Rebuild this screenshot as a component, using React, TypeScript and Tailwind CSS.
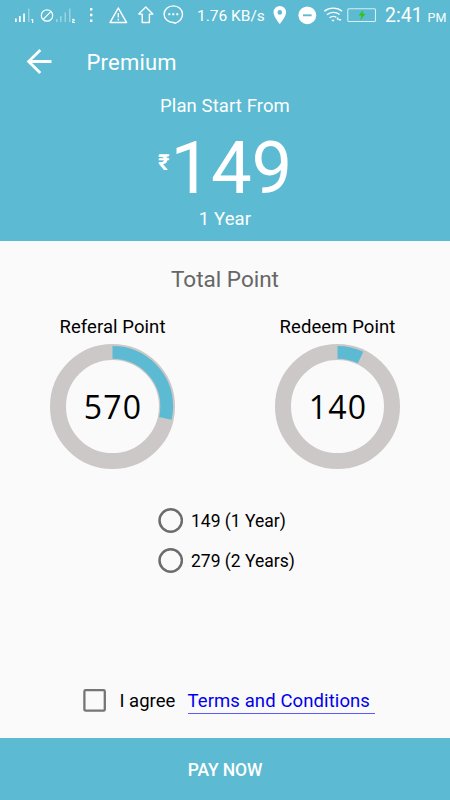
import React, { useState } from 'react';

interface PointRingProps {
  label: string;
  points: number;
}

interface Plan {
  id: string;
  label: string;
}

const MAX_POINTS = 2000;

const PLANS: Plan[] = [
  { id: 'one', label: '149 (1 Year)' },
  { id: 'two', label: '279 (2 Years)' },
];

const StatusBar: React.FC = () => (
  <div className="flex h-8 items-center text-white">
    {/* Signals and notifications */}
    <svg className="h-8 w-[190px] shrink-0" viewBox="0 0 190 32" fill="none">
      <g fill="#fff">
        <path d="M15 18.500h1.700V22H15zM19 16h1.700v6H19zM23.200 13.500h1.700V22h-1.700z" />
        <path d="M28 8.500h1.500V22H28z" opacity="0.350" />
        <path d="M31.400 19h1.800v4h-1.200v-2.700h-.8z" />
        <path d="M56 19h1.600v3H56zM60 16h1.600v6H60zM64.500 12.500H66V22h-1.500zM69 8.500h1.500V22H69z" opacity="0.380" />
        <path d="M90 8h2.400v2.400H90zM90 13.800h2.400v2.400H90zM90 19.600h2.400V22H90z" />
      </g>
      <circle cx="47" cy="15.500" r="5.700" stroke="#fff" strokeWidth="1.200" />
      <path d="M43.200 19.400l7.600-7.800" stroke="#fff" strokeWidth="1.200" />
      <path d="M72 19.400h2.200v1.500h-1.700v1.600h2.500" stroke="#fff" strokeWidth="1" />
      <path d="M118.300 8l8.300 14.600H110z" stroke="#fff" strokeWidth="1.500" strokeLinejoin="round" />
      <path d="M118.300 13v4.500M118.300 18.800v1.700" stroke="#fff" strokeWidth="1.400" />
      <path d="M145.800 7l7 7.100h-3.400v8.400h-7.200v-8.400h-3.400z" stroke="#fff" strokeWidth="1.400" strokeLinejoin="round" />
      <path d="M175 23.300c-.4-.4-.8-.8-1.700-.8-5.200 0-9.200-3.700-9.200-8.300s4.100-8.300 9.200-8.300 9.200 3.700 9.200 8.300c0 4.200-2.900 7.300-7.500 9.100z" stroke="#fff" strokeWidth="1.400" />
      <path d="M168.300 13.300h2v2h-2zM172.300 13.300h2v2h-2zM176.300 13.300h2v2h-2z" fill="#fff" />
    </svg>
    <span className="ml-[7px] w-[70px] whitespace-nowrap text-[15.500px] leading-8">1.76 KB/s</span>
    {/* Location, do not disturb, wifi, battery */}
    <svg className="h-8 w-[116px] shrink-0" viewBox="267 0 116 32" fill="none">
      <path d="M279.800 6a6.300 6.300 0 0 0-6.300 6.300c0 4.700 6.300 11.700 6.300 11.700s6.300-7 6.300-11.700A6.300 6.300 0 0 0 279.800 6zm0 4.100a2.300 2.300 0 1 1 0 4.600 2.300 2.300 0 0 1 0-4.600z" fill="#fff" fillRule="evenodd" />
      <circle cx="307.300" cy="15.300" r="8.900" fill="#fff" />
      <path d="M303 15.300h8.600" stroke="#5cbad2" strokeWidth="1.900" />
      <path d="M324.300 11.300c5-4.200 12.800-4.200 17.800 0M326.800 14.700c3.800-3.100 9-3.100 12.800-.2M329.600 17.800c2.200-1.700 4.500-1.800 6.700-.7" stroke="#fff" strokeWidth="1.400" />
      <path d="M331.300 19.700h3.400l-1.700 2zM336.800 17.500h1.700v2.200h-1.700zM338.300 19h3.200l-1.600 2.200z" fill="#fff" />
      <rect x="347.800" y="8.700" width="27.700" height="12.800" rx="1" stroke="#fff" strokeOpacity="0.750" strokeWidth="1.100" />
      <path d="M363.300 9.800l-4.500 5.700h2.700l-1.500 5 5.500-6.800h-2.800z" fill="#32c414" />
    </svg>
    <span className="ml-[2px] whitespace-nowrap pt-[2px] text-[19.500px] leading-8">
      2:41<span className="ml-[5px] text-[12.500px]">PM</span>
    </span>
  </div>
);

const PointRing: React.FC<PointRingProps> = ({ label, points }) => {
  // The arc starts at twelve o'clock and runs clockwise
  const circumference = 2 * Math.PI * 54.2;
  const filled = (points / MAX_POINTS) * circumference;

  return (
    <div className="flex w-[225px] flex-col items-center">
      <h3 className="text-[18.500px] leading-6 tracking-[0.070px] text-black">{label}</h3>
      <div className="mt-[5px] grid size-[125px] place-items-center">
        <svg className="col-start-1 row-start-1 size-[125px]" viewBox="0 0 125 125" fill="none">
          <circle cx="62.500" cy="62.500" r="54.500" stroke="#ccc8c8" strokeWidth="16" />
          <circle
            cx="62.500"
            cy="62.500"
            r="54.200"
            stroke="#5cbad2"
            strokeWidth="12.800"
            strokeDasharray={`${filled} ${circumference}`}
            transform="rotate(-90 62.5 62.5)"
          />
        </svg>
        <span className="col-start-1 row-start-1 pt-[2px] pl-px font-['Open_Sans',sans-serif] text-[32px] leading-none tracking-[1.200px] text-black">
          {points}
        </span>
      </div>
    </div>
  );
};

export default function App() {
  const [plan, setPlan] = useState('');
  const [agreed, setAgreed] = useState(false);

  return (
    <div className="flex h-[800px] w-[450px] flex-col overflow-hidden bg-[#fafafa] font-[Roboto,sans-serif]">
      {/* Header */}
      <header className="h-[240.500px] shrink-0 bg-[#5cbad2] text-white">
        <StatusBar />
        <div className="flex h-[60px] items-center pl-[26px]">
          <button aria-label="Back">
            <svg className="size-[26px]" viewBox="0 0 26 26" fill="none" stroke="#fff" strokeWidth="2.800">
              <path d="M25.500 12.500H3M14.300 1L2.600 12.500l11.700 11.500" />
            </svg>
          </button>
          <h1 className="ml-[34.500px] pt-px text-[22px] leading-7 tracking-[0.200px]">Premium</h1>
        </div>
        <div className="flex flex-col items-center">
          <p className="mt-0.5 text-[18.500px] leading-6 tracking-[0.100px]">Plan Start From</p>
          <div className="flex h-[88px] items-start">
            <span className="mt-[33px] text-[22px] font-bold leading-6">₹</span>
            <span className="mt-[15px] ml-px text-[72.500px] leading-[72px] tracking-[-0.300px]">149</span>
          </div>
          <p className="mt-[1px] text-[18.500px] leading-6 tracking-[0.100px]">1 Year</p>
        </div>
      </header>

      {/* Points */}
      <section className="h-[229px] pt-[22.500px]">
        <h2 className="text-center text-[22.500px] leading-8 text-[#666]">Total Point</h2>
        <div className="mt-[19.500px] flex">
          <PointRing label="Referal Point" points={570} />
          <PointRing label="Redeem Point" points={140} />
        </div>
      </section>

      {/* Plans */}
      <div className="mt-[31px] flex flex-col pl-[158px]">
        {PLANS.map((item) => (
          <button key={item.id} onClick={() => setPlan(item.id)} className="flex h-10 items-center">
            <svg className="size-[25px]" viewBox="0 0 25 25" fill="none">
              <circle cx="12.700" cy="12.500" r="11.200" stroke="#6c6c6c" strokeWidth="2.500" />
              {plan === item.id && <circle cx="12.700" cy="12.500" r="6" fill="#5cbad2" />}
            </svg>
            <span className="ml-2 pt-0.5 text-[17.500px] text-black">{item.label}</span>
          </button>
        ))}
      </div>

      {/* Terms */}
      <div className="mt-auto mb-[24px] flex items-start pl-[83px]">
        <button aria-label="I agree" onClick={() => setAgreed(!agreed)}>
          <svg className="size-[23px]" viewBox="0 0 23 23" fill="none">
            <rect x="1.400" y="1.200" width="20.400" height="20.400" rx="1.200" stroke="#757575" strokeWidth="2.300" />
            {agreed && <path d="M6 11.500l4 4 7-8" stroke="#5cbad2" strokeWidth="2.300" />}
          </svg>
        </button>
        <span className="ml-[13.500px] w-[68px] text-[18.500px] leading-6">I agree</span>
        <a href="#terms" className="w-[187.500px] border-b border-[#5a5aff] text-[18.500px] leading-6 tracking-[0.100px] text-[#0000ee]">
          Terms and Conditions
        </a>
      </div>

      <button className="h-[62px] shrink-0 bg-[#5cbad2] pt-0.5 text-[17.500px] font-medium tracking-[-0.100px] text-white">
        PAY NOW
      </button>
    </div>
  );
}
